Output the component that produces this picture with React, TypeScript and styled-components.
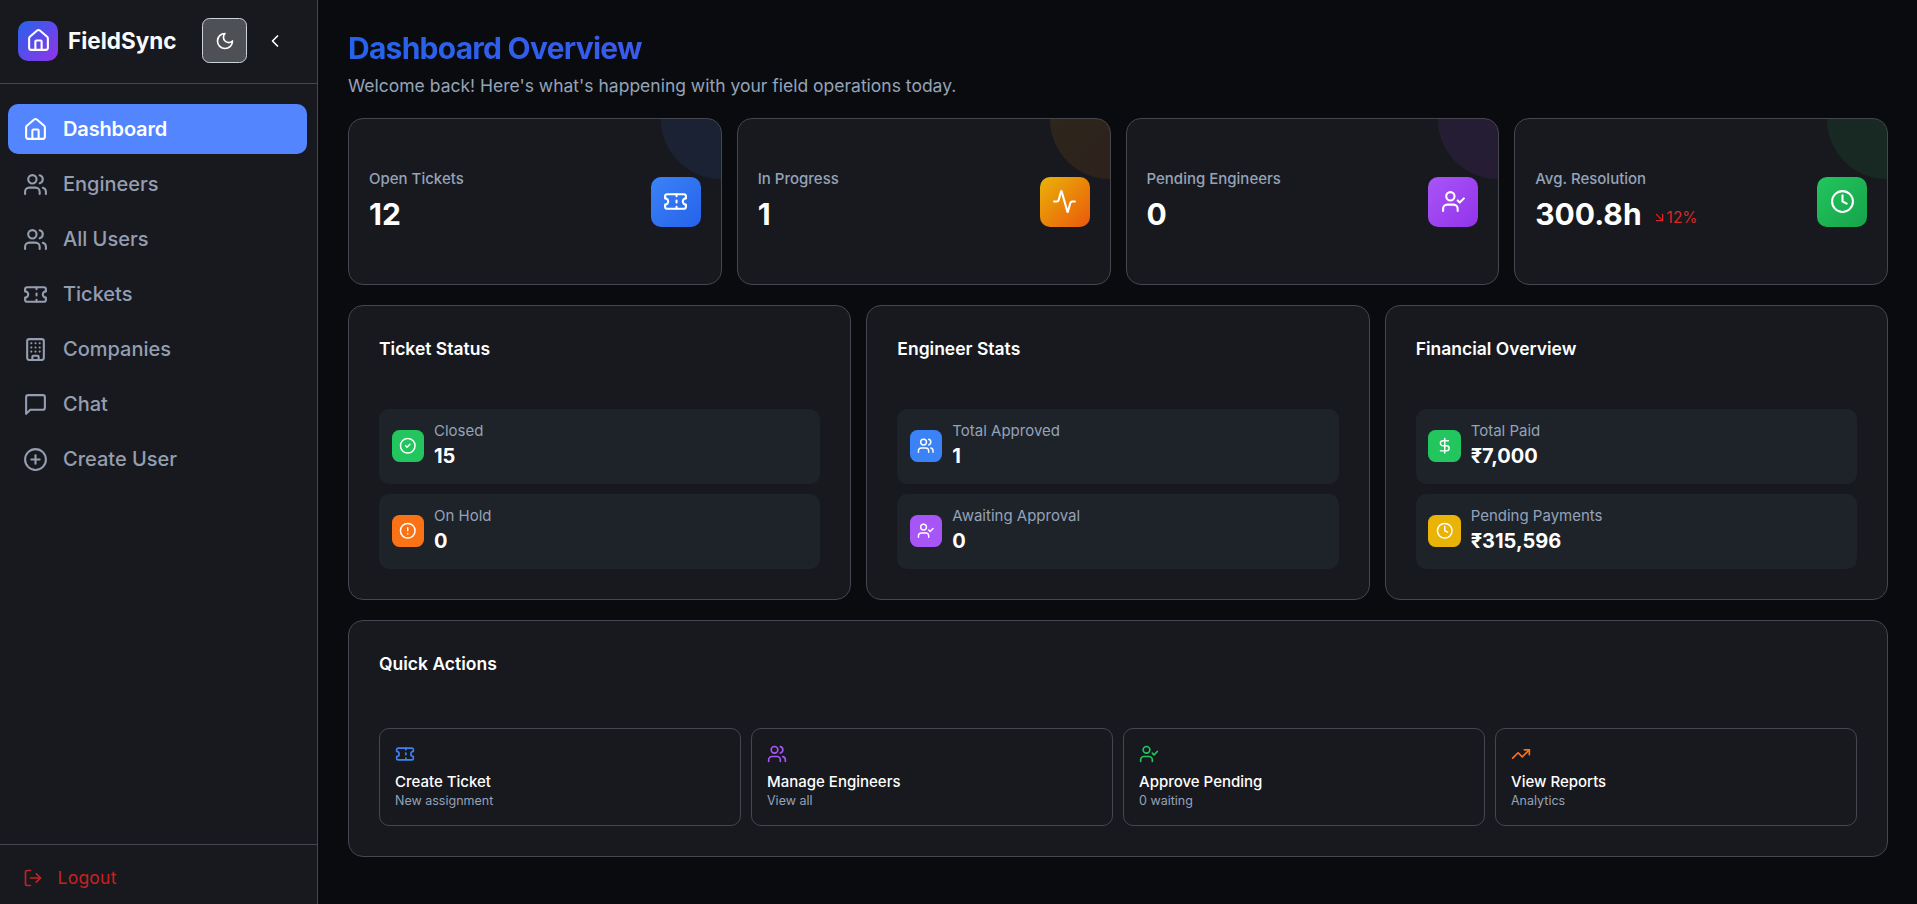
import React from "react";
import styled, { createGlobalStyle } from "styled-components";
import {
  Activity,
  ArrowDownRight,
  Building,
  ChevronLeft,
  CircleAlert,
  CircleCheck,
  CirclePlus,
  Clock,
  DollarSign,
  House,
  LogOut,
  Ticket,
  TrendingUp,
  UserCheck,
  Users,
} from "lucide-react";

const color = {
  page: "#0a0b0f",
  surface: "#18191e",
  row: "#1e2229",
  border: "#45464f",
  text: "#ffffff",
  muted: "#94a3b8",
  nav: "#949eb0",
  active: "#5385ff",
  danger: "#c52222",
};

const GlobalStyle = createGlobalStyle`
  *, *::before, *::after { box-sizing: border-box; }
  html, body, #root { height: 100%; }
  body {
    margin: 0;
    overflow: hidden;
    background: ${color.page};
    color: ${color.text};
    font-family: Inter, "Liberation Sans", sans-serif;
  }
  svg { display: block; flex-shrink: 0; }
  h1, h2, p { margin: 0; }
  button { font: inherit; color: inherit; }
`;

const Shell = styled.div`
  display: flex;
  height: 100vh;
`;

/* ---------- Sidebar ---------- */

const Sidebar = styled.aside`
  display: flex;
  flex-direction: column;
  flex: 0 0 318px;
  background: ${color.surface};
  border-right: 1px solid ${color.border};
`;

const SidebarHeader = styled.header`
  display: flex;
  align-items: center;
  height: 84px;
  padding: 0 24px 2px 18px;
  border-bottom: 1px solid ${color.border};
`;

const Logo = styled.div`
  display: grid;
  place-items: center;
  width: 40px;
  height: 40px;
  border-radius: 10px;
  background: linear-gradient(135deg, #2563eb, #9333ea);
`;

const Brand = styled.span`
  flex: 1;
  margin-left: 10px;
  font-size: 22.5px;
  line-height: 30px;
  font-weight: 700;
  color: #f8fafc;
`;

const ThemeButton = styled.button`
  display: grid;
  place-items: center;
  width: 45px;
  height: 45px;
  padding: 0;
  border: 1px solid #ccd3d8;
  border-radius: 7.5px;
  background: #4e5055;
`;

const CollapseButton = styled.button`
  display: grid;
  place-items: center;
  width: 36px;
  height: 36px;
  margin-left: 10px;
  padding: 0;
  border: 0;
  background: none;
`;

const Nav = styled.nav`
  display: flex;
  flex: 1;
  flex-direction: column;
  gap: 5px;
  padding: 20px 10px 0 8px;
`;

const NavItem = styled.a<{ $active?: boolean }>`
  display: flex;
  align-items: center;
  gap: 15.5px;
  height: 50px;
  padding: 0 14.5px;
  border-radius: 10px;
  background: ${(p) => (p.$active ? color.active : "transparent")};
  color: ${(p) => (p.$active ? "#ffffff" : color.nav)};
  font-size: 20px;
  font-weight: ${(p) => (p.$active ? 600 : 500)};
  letter-spacing: ${(p) => (p.$active ? "-0.15px" : "normal")};
`;

const SidebarFooter = styled.footer`
  display: flex;
  align-items: center;
  gap: 15px;
  height: 60px;
  padding: 6px 22.5px 0;
  border-top: 1px solid ${color.border};
  color: ${color.danger};
  font-size: 17.5px;
  letter-spacing: 0.25px;
`;

/* ---------- Main ---------- */

const Main = styled.main`
  display: flex;
  flex: 1;
  flex-direction: column;
  gap: 20px;
  min-width: 0;
  padding: 30px 29px 0 30px;
`;

const Title = styled.h1`
  background: linear-gradient(90deg, #2563eb, #9333ea);
  background-clip: text;
  -webkit-background-clip: text;
  color: transparent;
  font-size: 30px;
  line-height: 36px;
  font-weight: 700;
  letter-spacing: -0.025em;
`;

const Subtitle = styled.p`
  margin-top: 7px;
  color: ${color.muted};
  font-size: 17.5px;
  line-height: 25px;
`;

const Grid = styled.section<{ $columns: number; $gap: number }>`
  display: grid;
  grid-template-columns: repeat(${(p) => p.$columns}, minmax(0, 1fr));
  gap: ${(p) => p.$gap}px;
`;

const Card = styled.article`
  background: ${color.surface};
  border: 1px solid ${color.border};
  border-radius: 15px;
`;

const StatCard = styled(Card)`
  position: relative;
  display: flex;
  align-items: center;
  justify-content: space-between;
  height: 167px;
  padding: 0 20px;
  overflow: hidden;
`;

const CornerGlow = styled.span<{ $fill: string }>`
  position: absolute;
  top: -60px;
  right: -60px;
  width: 120px;
  height: 120px;
  border-radius: 50%;
  background: ${(p) => p.$fill};
  opacity: 0.1;
`;

const StatLabel = styled.p`
  color: ${color.muted};
  font-size: 15px;
  line-height: 22px;
  font-weight: 500;
`;

const StatLine = styled.div`
  display: flex;
  gap: 10px;
  margin-top: 5px;
  padding-bottom: 2px;
`;

const StatValue = styled.span`
  font-size: 30px;
  line-height: 38px;
  font-weight: 700;
`;

const Trend = styled.span`
  display: flex;
  align-items: center;
  padding-top: 7px;
  color: #dc2626;
  font-size: 15.5px;
  font-weight: 400;
`;

const StatIcon = styled.span<{ $fill: string }>`
  position: relative;
  display: grid;
  place-items: center;
  width: 50px;
  height: 50px;
  border-radius: 10px;
  background: ${(p) => p.$fill};
`;

const Panel = styled(Card)`
  padding: 30px;
`;

const PanelTitle = styled.h2<{ $gap?: number }>`
  margin-bottom: ${(p) => p.$gap ?? 48}px;
  font-size: 17.5px;
  line-height: 25px;
  font-weight: 600;
`;

const MetricList = styled.div`
  display: flex;
  flex-direction: column;
  gap: 10px;
`;

const Metric = styled.div`
  display: flex;
  align-items: center;
  gap: 10px;
  height: 75px;
  padding: 0 12.5px 1px;
  border-radius: 10px;
  background: ${color.row};
`;

const MetricIcon = styled.span<{ $fill: string }>`
  display: grid;
  place-items: center;
  width: 32.5px;
  height: 32.5px;
  border-radius: 7.5px;
  background: ${(p) => p.$fill};
`;

const MetricLabel = styled.p`
  color: ${color.muted};
  font-size: 15px;
  line-height: 20px;
`;

const MetricValue = styled.p`
  font-size: 20px;
  line-height: 30px;
  font-weight: 700;
`;

const Action = styled.button<{ $accent: string }>`
  display: flex;
  flex-direction: column;
  align-items: flex-start;
  height: 98px;
  padding: 15px;
  border: 1px solid ${color.border};
  border-radius: 10px;
  background: transparent;
  text-align: left;

  svg {
    margin-bottom: 7px;
    color: ${(p) => p.$accent};
  }
`;

const ActionTitle = styled.span`
  font-size: 15px;
  line-height: 21px;
  font-weight: 500;
`;

const ActionNote = styled.span`
  color: ${color.muted};
  font-size: 12.5px;
  line-height: 18px;
`;

/* ---------- Icons drawn by hand ---------- */

type IconProps = { size?: number };

const MoonIcon = ({ size = 20 }: IconProps) => (
  <svg width={size} height={size} viewBox="0 0 24 24" fill="none" stroke="currentColor" strokeWidth="2" strokeLinecap="round" strokeLinejoin="round">
    <path d="M12 3a6 6 0 0 0 9 9 9 9 0 1 1-9-9Z" />
  </svg>
);

const ChatIcon = ({ size = 25 }: IconProps) => (
  <svg width={size} height={size} viewBox="0 0 24 24" fill="none" stroke="currentColor" strokeWidth="2" strokeLinecap="round" strokeLinejoin="round">
    <path d="M21 15a2 2 0 0 1-2 2H7l-4 4V5a2 2 0 0 1 2-2h14a2 2 0 0 1 2 2z" />
  </svg>
);

/* ---------- Content ---------- */

type Icon = React.ComponentType<{ size?: number }>;

const navItems: { label: string; icon: Icon }[] = [
  { label: "Dashboard", icon: House },
  { label: "Engineers", icon: Users },
  { label: "All Users", icon: Users },
  { label: "Tickets", icon: Ticket },
  { label: "Companies", icon: Building },
  { label: "Chat", icon: ChatIcon },
  { label: "Create User", icon: CirclePlus },
];

const stats: { label: string; value: string; trend?: string; icon: Icon; fill: string }[] = [
  { label: "Open Tickets", value: "12", icon: Ticket, fill: "linear-gradient(135deg, #3b82f6, #2563eb)" },
  { label: "In Progress", value: "1", icon: Activity, fill: "linear-gradient(135deg, #eab308, #ea580c)" },
  { label: "Pending Engineers", value: "0", icon: UserCheck, fill: "linear-gradient(135deg, #a855f7, #9333ea)" },
  { label: "Avg. Resolution", value: "300.8h", trend: "12%", icon: Clock, fill: "linear-gradient(135deg, #22c55e, #16a34a)" },
];

const panels: { title: string; metrics: { label: string; value: string; icon: Icon; fill: string }[] }[] = [
  {
    title: "Ticket Status",
    metrics: [
      { label: "Closed", value: "15", icon: CircleCheck, fill: "#22c55e" },
      { label: "On Hold", value: "0", icon: CircleAlert, fill: "#f97316" },
    ],
  },
  {
    title: "Engineer Stats",
    metrics: [
      { label: "Total Approved", value: "1", icon: Users, fill: "#3b82f6" },
      { label: "Awaiting Approval", value: "0", icon: UserCheck, fill: "#a855f7" },
    ],
  },
  {
    title: "Financial Overview",
    metrics: [
      { label: "Total Paid", value: "₹7,000", icon: DollarSign, fill: "#22c55e" },
      { label: "Pending Payments", value: "₹315,596", icon: Clock, fill: "#eab308" },
    ],
  },
];

const actions: { title: string; note: string; icon: Icon; accent: string }[] = [
  { title: "Create Ticket", note: "New assignment", icon: Ticket, accent: "#3b82f6" },
  { title: "Manage Engineers", note: "View all", icon: Users, accent: "#a855f7" },
  { title: "Approve Pending", note: "0 waiting", icon: UserCheck, accent: "#22c55e" },
  { title: "View Reports", note: "Analytics", icon: TrendingUp, accent: "#f97316" },
];

export default function App() {
  return (
    <>
      <GlobalStyle />
      <Shell>
        <Sidebar>
          <SidebarHeader>
            <Logo>
              <House size={25} />
            </Logo>
            <Brand>FieldSync</Brand>
            <ThemeButton aria-label="Toggle theme">
              <MoonIcon size={20} />
            </ThemeButton>
            <CollapseButton aria-label="Collapse sidebar">
              <ChevronLeft size={20} />
            </CollapseButton>
          </SidebarHeader>
          <Nav>
            {navItems.map(({ label, icon: ItemIcon }, i) => (
              <NavItem key={label} $active={i === 0}>
                <ItemIcon size={25} />
                {label}
              </NavItem>
            ))}
          </Nav>
          <SidebarFooter>
            <LogOut size={20} />
            Logout
          </SidebarFooter>
        </Sidebar>

        <Main>
          <header>
            <Title>Dashboard Overview</Title>
            <Subtitle>Welcome back! Here's what's happening with your field operations today.</Subtitle>
          </header>

          <Grid $columns={4} $gap={15}>
            {stats.map(({ label, value, trend, icon: ItemIcon, fill }) => (
              <StatCard key={label}>
                <CornerGlow $fill={fill} />
                <div>
                  <StatLabel>{label}</StatLabel>
                  <StatLine>
                    <StatValue>{value}</StatValue>
                    {trend && (
                      <Trend>
                        <ArrowDownRight size={15} />
                        {trend}
                      </Trend>
                    )}
                  </StatLine>
                </div>
                <StatIcon $fill={fill}>
                  <ItemIcon size={25} />
                </StatIcon>
              </StatCard>
            ))}
          </Grid>

          <Grid $columns={3} $gap={15}>
            {panels.map(({ title, metrics }) => (
              <Panel key={title}>
                <PanelTitle>{title}</PanelTitle>
                <MetricList>
                  {metrics.map(({ label, value, icon: ItemIcon, fill }) => (
                    <Metric key={label}>
                      <MetricIcon $fill={fill}>
                        <ItemIcon size={17.5} />
                      </MetricIcon>
                      <div>
                        <MetricLabel>{label}</MetricLabel>
                        <MetricValue>{value}</MetricValue>
                      </div>
                    </Metric>
                  ))}
                </MetricList>
              </Panel>
            ))}
          </Grid>

          <Panel>
            <PanelTitle $gap={52}>Quick Actions</PanelTitle>
            <Grid $columns={4} $gap={10}>
              {actions.map(({ title, note, icon: ItemIcon, accent }) => (
                <Action key={title} $accent={accent}>
                  <ItemIcon size={20} />
                  <ActionTitle>{title}</ActionTitle>
                  <ActionNote>{note}</ActionNote>
                </Action>
              ))}
            </Grid>
          </Panel>
        </Main>
      </Shell>
    </>
  );
}
